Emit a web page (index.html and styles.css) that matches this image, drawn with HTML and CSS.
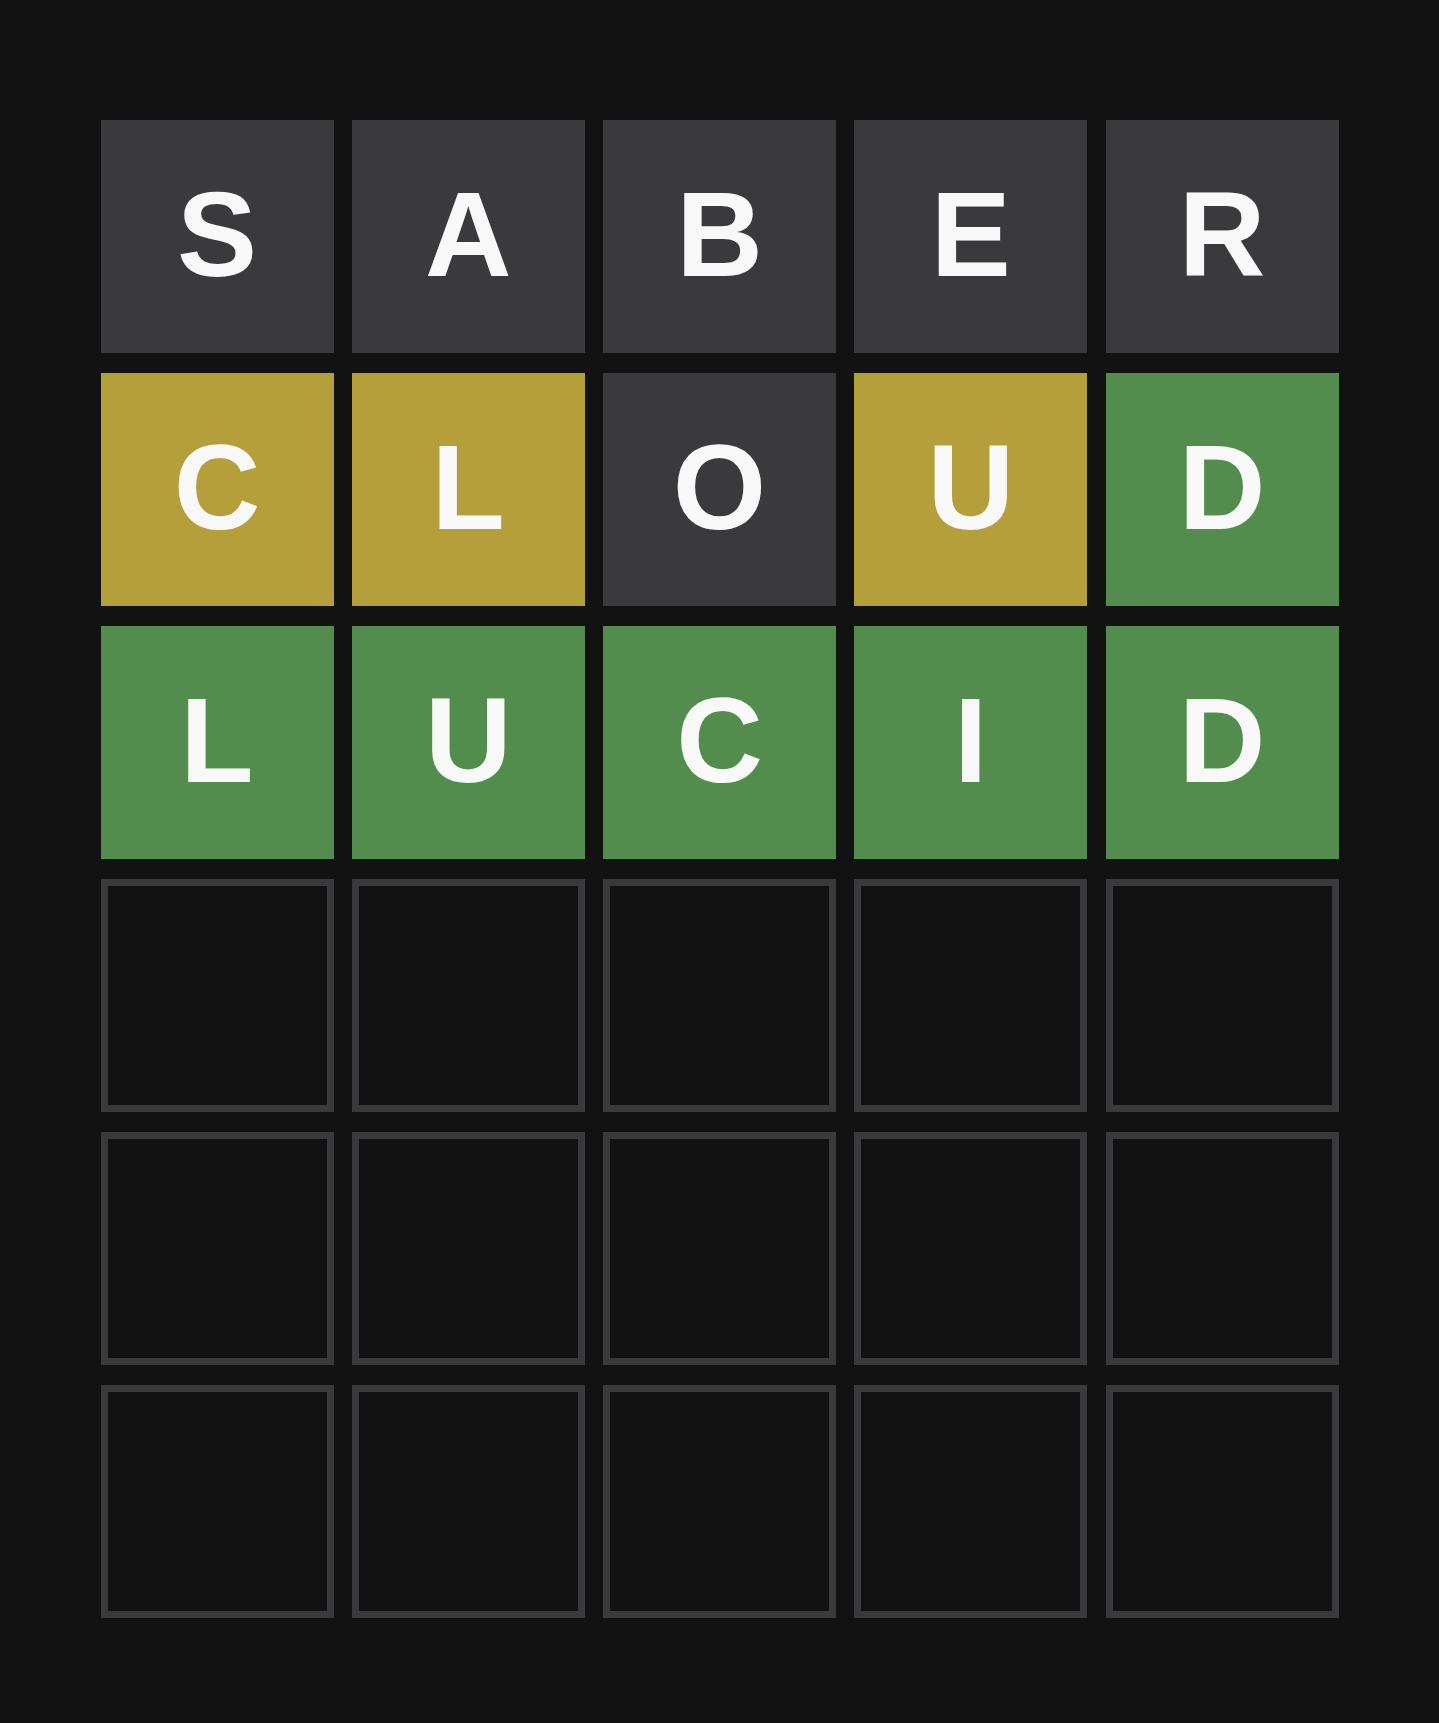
FILE: index.html
```html
<!DOCTYPE html>
<html lang="en">
<head>
<meta charset="utf-8">
<title>Wordle board</title>
<link rel="stylesheet" href="styles.css">
</head>
<body>
<main class="board">
  <div class="tile absent">S</div>
  <div class="tile absent">A</div>
  <div class="tile absent">B</div>
  <div class="tile absent">E</div>
  <div class="tile absent">R</div>

  <div class="tile present">C</div>
  <div class="tile present">L</div>
  <div class="tile absent">O</div>
  <div class="tile present">U</div>
  <div class="tile correct">D</div>

  <div class="tile correct">L</div>
  <div class="tile correct">U</div>
  <div class="tile correct">C</div>
  <div class="tile correct">I</div>
  <div class="tile correct">D</div>

  <div class="tile empty"></div>
  <div class="tile empty"></div>
  <div class="tile empty"></div>
  <div class="tile empty"></div>
  <div class="tile empty"></div>

  <div class="tile empty"></div>
  <div class="tile empty"></div>
  <div class="tile empty"></div>
  <div class="tile empty"></div>
  <div class="tile empty"></div>

  <div class="tile empty"></div>
  <div class="tile empty"></div>
  <div class="tile empty"></div>
  <div class="tile empty"></div>
  <div class="tile empty"></div>
</main>
</body>
</html>
```

FILE: styles.css
```css
html, body {
  margin: 0;
  padding: 0;
  background: #121213;
}

body {
  min-height: 1723px;
  font-family: "Liberation Sans", Arial, sans-serif;
}

.board {
  display: grid;
  grid-template-columns: repeat(5, 233px);
  grid-auto-rows: 233px;
  column-gap: 18.25px;
  row-gap: 20px;
  justify-content: center;
  padding-top: 120px;
}

.tile {
  box-sizing: border-box;
  display: flex;
  align-items: center;
  justify-content: center;
  font-size: 120px;
  font-weight: 700;
  line-height: 1;
  color: #f8f8f8;
  padding-bottom: 6px;
  text-transform: uppercase;
}

.absent { background: #3a3a3c; }
.present { background: #b59f3b; }
.correct { background: #538d4e; }

.empty {
  border: 7px solid #3a3a3c;
  background: #121213;
}
```
